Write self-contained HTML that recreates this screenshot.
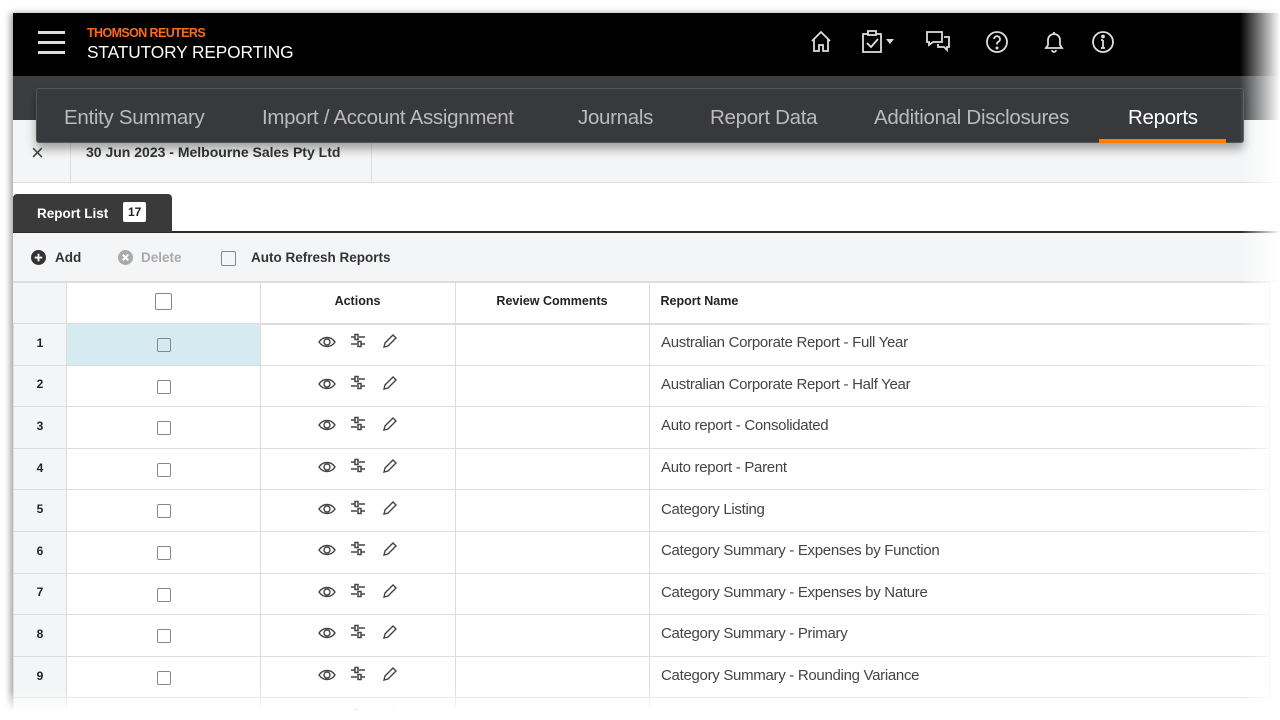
<!DOCTYPE html>
<html><head><meta charset="utf-8"><style>
*{box-sizing:border-box;margin:0;padding:0}
body{width:1280px;height:720px;background:#fff;position:relative;overflow:hidden;font-family:"Liberation Sans",Arial,sans-serif}
.frame{position:absolute;left:13px;top:13px;width:1267px;height:707px;overflow:hidden;background:#fff;box-shadow:-3px 0 6px rgba(0,0,0,.35)}
.hdr{position:absolute;left:0;top:0;width:100%;height:63px;background:#000}
.burger{position:absolute;left:25px;top:18px;width:27px}
.burger i{display:block;height:3px;background:#ddd;margin-bottom:7px}
.tr{position:absolute;left:74px;top:13px;color:#ff6a13;font-weight:bold;font-size:12.5px;letter-spacing:-.6px}
.sr{position:absolute;left:74px;top:29px;color:#fff;font-size:17.3px;letter-spacing:-.1px}
.icons svg{position:absolute;top:17px}
.grey{position:absolute;left:0;top:63px;width:100%;height:44px;background:#3c3d40}
.nav{position:absolute;left:23px;top:75px;width:1208px;height:55px;background:#38393d;border:1px solid #555;border-radius:3px;box-shadow:0 6px 10px rgba(0,0,0,.35);color:#bbb;font-size:20.5px}
.nav span{position:absolute;top:17px;letter-spacing:-.3px}
.crumb{position:absolute;left:0;top:107px;width:100%;height:63px;background:#f4f5f6;border-bottom:1px solid #ddd}
.tabbar{position:absolute;left:0;top:170px;width:100%;height:50px;background:#fff;border-bottom:2px solid #2b2b2b}
.tab{position:absolute;left:0;top:11px;width:159px;height:38px;background:#3a3a3a;border-radius:4px 4px 0 0;color:#fff;font-weight:bold;font-size:13.5px}
.tool{position:absolute;left:0;top:220px;width:100%;height:49px;background:#f4f5f6;border-bottom:1px solid #ddd;font-size:13.5px;font-weight:bold}
table{position:absolute;left:0;top:269px;border-collapse:collapse;font-size:13.5px}
td,th{border:1px solid #ddd;height:41.6px}
th{font-size:12.5px;color:#222;padding-bottom:4px}
td.n{background:#f4f5f6;width:53px;text-align:center;font-weight:bold;font-size:12px;color:#222;padding-bottom:3px}
.cb{display:inline-block;width:14px;height:14px;border:1.5px solid #888;border-radius:2px;vertical-align:middle}
td.a{text-align:center;width:195px;padding-bottom:3px}
td.nm{color:#444;padding-left:11px;width:620px;font-size:15px;letter-spacing:-.3px;padding-bottom:3px}
.fadeR{position:absolute;right:0;top:0;width:40px;height:720px;background:linear-gradient(90deg,rgba(255,255,255,0),#fff)}
.fadeB{position:absolute;left:0;top:690px;width:1280px;height:30px;background:linear-gradient(180deg,rgba(255,255,255,0),#fff 70%)}
</style></head><body>
<div class="frame">
<div class="hdr">
<div class="burger"><i></i><i></i><i></i></div>
<div class="tr">THOMSON REUTERS</div>
<div class="sr">STATUTORY REPORTING</div>
<div class="icons">
<svg style="left:797px" width="22" height="24" viewBox="0 0 22 24" fill="none" stroke="#ddd" stroke-width="1.8"><path d="M2 11L11 2l9 9M4 9v12h5v-6h4v6h5V9"/></svg>
<svg style="left:849px" width="40" height="24" viewBox="0 0 40 24" fill="none" stroke="#ddd" stroke-width="1.8"><rect x="1" y="4" width="18" height="18"/><rect x="6" y="1" width="8" height="4" fill="#000"/><path d="M5 13l4 4 7-8"/><path d="M24 9h8l-4 5z" fill="#ddd" stroke="none"/></svg>
<svg style="left:913px" width="24" height="24" viewBox="0 0 24 24" fill="none" stroke="#ddd" stroke-width="1.8"><path d="M1 2h15v10H7l-4 3v-3H1z"/><path d="M18 7h5v10h-2v3l-3-3h-6v-3"/></svg>
<svg style="left:972px" width="24" height="24" viewBox="0 0 24 24" fill="none" stroke="#ddd" stroke-width="1.8"><circle cx="12" cy="12" r="10"/><path d="M9 9a3 3 0 1 1 4 3c-1 .5-1 1-1 2.5"/><circle cx="12" cy="18" r=".6" fill="#ddd"/></svg>
<svg style="left:1029px" width="24" height="24" viewBox="0 0 24 24" fill="none" stroke="#ddd" stroke-width="1.8"><path d="M4 18h16l-2-3V10a6 6 0 0 0-12 0v5zM10 20a2 2 0 0 0 4 0M12 2v2"/></svg>
<svg style="left:1078px" width="24" height="24" viewBox="0 0 24 24" fill="none" stroke="#ddd" stroke-width="1.8"><circle cx="12" cy="12" r="10"/><path d="M12 10v8M10 18h4M10 10h2"/><circle cx="12" cy="6.5" r="1" fill="#ddd"/></svg>
</div></div>
<div class="grey"></div>
<div class="crumb">
<div style="position:absolute;left:18px;top:20px;font-size:22px;color:#444">×</div>
<div style="position:absolute;left:57px;top:0;width:302px;height:62px;border-left:1px solid #ddd;border-right:1px solid #ddd"></div>
<div style="position:absolute;left:73px;top:24px;font-size:14px;font-weight:bold;color:#333">30 Jun 2023 - Melbourne Sales Pty Ltd</div>
</div>
<div class="nav">
<span style="left:27px">Entity Summary</span>
<span style="left:225px">Import / Account Assignment</span>
<span style="left:541px">Journals</span>
<span style="left:673px">Report Data</span>
<span style="left:837px">Additional Disclosures</span>
<span style="left:1091px;color:#fff">Reports</span>
<div style="position:absolute;left:1062px;top:50px;width:127px;height:4px;background:#ff8000"></div>
</div>
<div class="tabbar"><div class="tab"><span style="position:absolute;left:24px;top:12px">Report List</span><span style="position:absolute;left:110px;top:8px;background:#fff;color:#222;font-size:12px;padding:3px 5px;border-radius:2px">17</span></div></div>
<div class="tool">
<svg style="position:absolute;left:18px;top:17px" width="15" height="15" viewBox="0 0 16 16"><circle cx="8" cy="8" r="8" fill="#333"/><path d="M8 4v8M4 8h8" stroke="#fff" stroke-width="2"/></svg>
<span style="position:absolute;left:42px;top:17px;color:#333">Add</span>
<svg style="position:absolute;left:105px;top:17px" width="15" height="15" viewBox="0 0 16 16"><circle cx="8" cy="8" r="8" fill="#aaa"/><path d="M5 5l6 6M11 5l-6 6" stroke="#fff" stroke-width="2"/></svg>
<span style="position:absolute;left:128px;top:17px;color:#aaa">Delete</span>
<span class="cb" style="position:absolute;left:208px;top:18px;width:15px;height:15px"></span>
<span style="position:absolute;left:238px;top:17px;color:#333">Auto Refresh Reports</span>
</div>
<table>
<tr><td class="n" style="border-left:0"></td><th style="width:194px"><span class="cb" style="width:17px;height:17px"></span></th><th style="width:195px">Actions</th><th style="width:194px">Review Comments</th><th style="text-align:left;padding-left:11px;width:620px">Report Name</th></tr>
</table>
<div id="rows"></div>
</div>
<div class="fadeR"></div><div class="fadeB"></div>
<script>
var names=["Australian Corporate Report - Full Year","Australian Corporate Report - Half Year","Auto report - Consolidated","Auto report - Parent","Category Listing","Category Summary - Expenses by Function","Category Summary - Expenses by Nature","Category Summary - Primary","Category Summary - Rounding Variance","Category Summary - Segment Analysis"];
var ic='<svg width="18" height="14" viewBox="0 0 18 14" fill="none" stroke="#444" stroke-width="1.4" style="margin-right:14px"><path d="M1 7c4-6 12-6 16 0-4 6-12 6-16 0z"/><circle cx="9" cy="7" r="3"/></svg><svg width="18" height="16" viewBox="0 0 18 16" fill="none" stroke="#444" stroke-width="1.5" style="margin-right:14px"><path d="M1 4h4M9 4h6M1 11h6M11 11h4"/><rect x="5" y="1.5" width="3" height="5"/><rect x="8" y="8.5" width="3" height="5"/></svg><svg width="16" height="16" viewBox="0 0 16 16" fill="none" stroke="#444" stroke-width="1.4"><path d="M11 2l3 3-8 8-4 1 1-4z"/></svg>';
var h='<table style="top:310px">';
for(var i=0;i<10;i++){h+='<tr><td class="n">'+(i<9?i+1:'')+'</td><td style="width:194px;text-align:center;'+(i==0?'background:#d6eaf2':'')+'"><span class="cb"></span></td><td class="a">'+ic+'</td><td style="width:194px"></td><td class="nm">'+names[i]+'</td></tr>';}
h+='</table>';
document.getElementById('rows').outerHTML=h;
</script>
</body></html>
